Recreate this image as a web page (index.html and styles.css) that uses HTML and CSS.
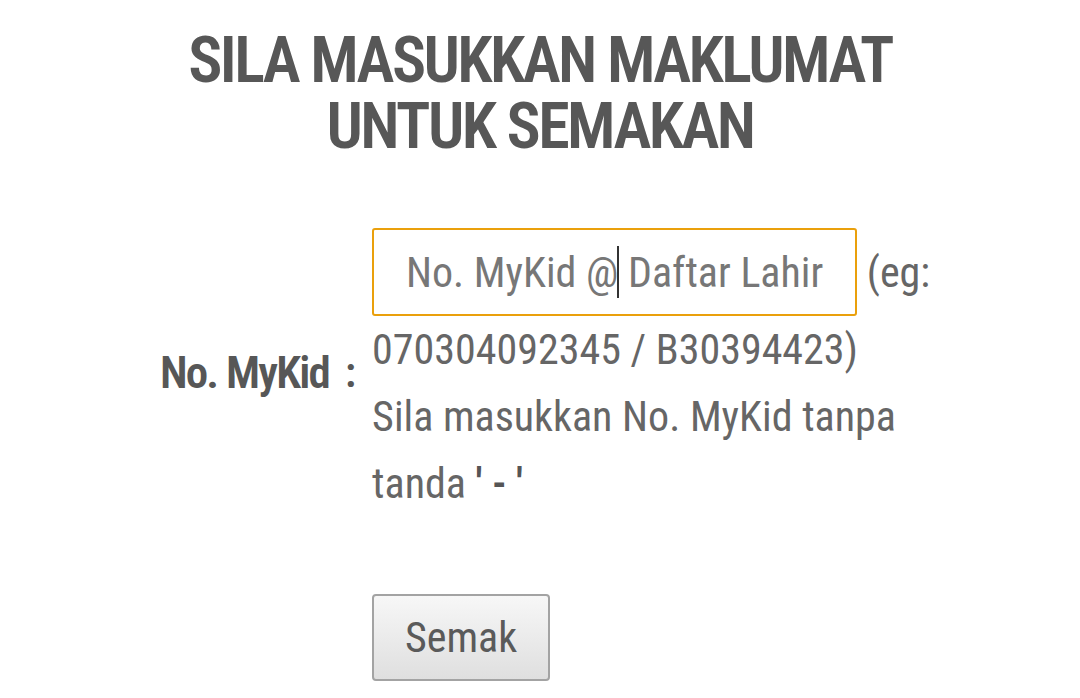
FILE: index.html
```html
<!DOCTYPE html>
<html lang="ms">
<head>
    <meta charset="UTF-8">
    <meta name="viewport" content="width=device-width, initial-scale=1.0">
    <title>Semakan MyKid</title>
    <link rel="stylesheet" href="styles.css">
</head>
<body>

    <h1>SILA MASUKKAN MAKLUMAT<br>UNTUK SEMAKAN</h1>

    <form class="semak-form" onsubmit="return false;">
        <label class="label" for="mykid">No. MyKid</label>
        <span class="colon">:</span>
        <div class="field">
            <span class="input-wrap">
                <input type="text" id="mykid" placeholder="No. MyKid @ Daftar Lahir">
                <span class="caret"></span>
            </span>
            (eg: 070304092345 / B30394423)<br>
            Sila masukkan No. MyKid tanpa tanda <b>' - '</b>
        </div>
        <div class="actions">
            <button type="submit">Semak</button>
        </div>
    </form>

</body>
</html>
```

FILE: styles.css
```css
html, body {
    margin: 0;
}

body {
    font-family: Roboto, "Noto Sans", sans-serif;
    font-stretch: condensed;
    background: #fff;
    color: #666;
}

h1 {
    margin: 28px 0 0;
    font-size: 64px;
    line-height: 66px;
    font-weight: 600;
    letter-spacing: -2.6px;
    text-align: center;
    color: #575757;
}

.semak-form {
    display: grid;
    grid-template-columns: auto auto 560px;
    column-gap: 16px;
    justify-content: center;
    align-items: center;
    margin-top: 68px;
    padding-left: 12px;
    font-size: 42px;
    line-height: 67px;
}

.label {
    font-size: 45px;
    font-weight: 600;
    letter-spacing: -1.8px;
    color: #575757;
}

.colon {
    font-weight: 600;
    color: #575757;
}

.field {
    color: #666;
}

.field b {
    font-weight: 600;
    color: #555;
}

.input-wrap {
    position: relative;
    display: inline-block;
}

input {
    width: 485px;
    height: 88px;
    box-sizing: border-box;
    border: 2px solid #eaa00c;
    border-radius: 3px;
    padding: 0 10px;
    font-family: inherit;
    font-stretch: condensed;
    font-size: 42px;
    text-align: center;
    color: #666;
    outline: none;
    vertical-align: baseline;
}

input::placeholder {
    color: #777;
}

/* caret shown in the empty, focused field */
.caret {
    position: absolute;
    left: 245px;
    top: 18px;
    width: 2px;
    height: 52px;
    background: #333;
}

.actions {
    grid-column: 3;
    padding-top: 77px;
    line-height: normal;
}

button {
    width: 178px;
    height: 87px;
    border: 2px solid #a3a3a3;
    border-radius: 4px;
    background: linear-gradient(#f7f7f7, #dfdfdf);
    font-family: inherit;
    font-stretch: condensed;
    font-size: 42px;
    color: #5a5a5a;
    cursor: pointer;
}
```
